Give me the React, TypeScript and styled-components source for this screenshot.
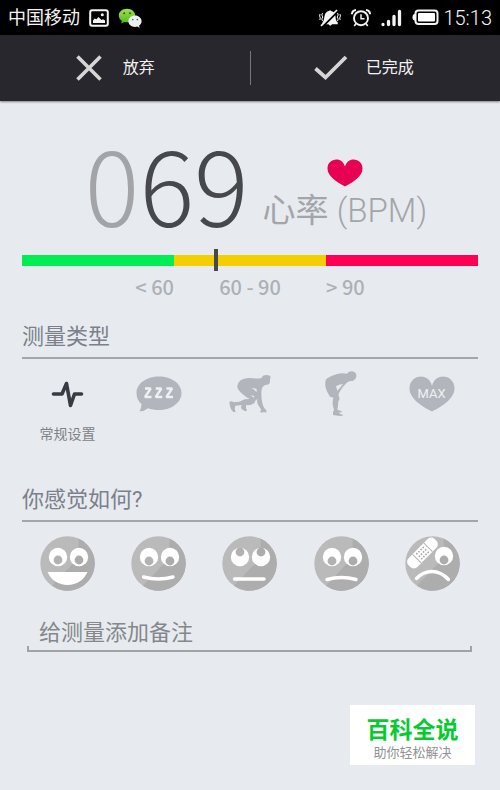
import React from "react";
import styled, { createGlobalStyle } from "styled-components";

const GlobalStyle = createGlobalStyle`
  * { box-sizing: border-box; }
  body {
    margin: 0;
    background: #e7ebf0;
    font-family: Roboto, "Noto Sans CJK SC", sans-serif;
  }
  button { font: inherit; border: 0; padding: 0; background: none; cursor: pointer; }
  svg { display: block; flex: none; }
`;

const Screen = styled.div`
  min-height: 100vh;
  display: flex;
  flex-direction: column;
  background: #e7ebf0;
`;

const StatusBar = styled.div`
  height: 35px;
  padding: 0 8px;
  display: flex;
  align-items: center;
  justify-content: space-between;
  background: #000;
  color: #f4f4f4;
`;

const StatusGroup = styled.div<{ $gap: number }>`
  display: flex;
  align-items: center;
  gap: ${(p) => p.$gap}px;
`;

const Carrier = styled.span`
  font-size: 18px;
  line-height: 24px;
`;

const Clock = styled.span`
  font-size: 20px;
  line-height: 24px;
  font-weight: 300;
  color: #f4f4f4;
`;

const ActionBar = styled.header`
  height: 66px;
  display: grid;
  grid-template-columns: 1fr 1px 1fr;
  align-items: center;
  background: #28272d;
  box-shadow: 0 1px 2px rgba(0, 0, 0, 0.45);
`;

const Divider = styled.span`
  height: 34px;
  background: #77777c;
`;

const Action = styled.button<{ $gap: number; $shift: number }>`
  height: 66px;
  display: flex;
  align-items: center;
  justify-content: center;
  gap: ${(p) => p.$gap}px;
  padding-right: ${(p) => p.$shift}px;
  && {
    color: #f2f2f2;
    font-size: 16px;
    line-height: 24px;
  }
`;

const Content = styled.main`
  flex: 1;
  display: flex;
  flex-direction: column;
  padding: 38px 22px 24px;
`;

const Reading = styled.section`
  height: 102px;
  display: flex;
  justify-content: center;
  gap: 14px;
  padding-left: 12px;
`;

const Digits = styled.div`
  font-family: "Noto Sans CJK SC", sans-serif;
  font-weight: 300;
  font-size: 102px;
  line-height: 88px;
  color: #47484c;
`;

const LeadingZero = styled.span`
  color: #a3a4a8;
`;

const Unit = styled.div`
  display: flex;
  flex-direction: column;
  align-items: center;
  gap: 2px;
  padding-top: 20px;
  color: #a4a5a9;
  font-size: 33px;
  line-height: 44px;
`;

const UnitCode = styled.span`
  font-weight: 300;
`;

const Gauge = styled.div`
  position: relative;
  margin-top: 14px;
  height: 11px;
  display: grid;
  grid-template-columns: repeat(3, 1fr);
`;

const Zone = styled.span<{ $color: string }>`
  background: ${(p) => p.$color};
`;

const Marker = styled.span`
  position: absolute;
  left: 42%;
  top: -6px;
  width: 4px;
  height: 22px;
  background: #47484c;
`;

const ZoneLabels = styled.div`
  display: grid;
  grid-template-columns: repeat(3, 1fr);
  margin-top: 9px;
  font-family: "Noto Sans CJK SC", sans-serif;
  font-weight: 500;
  font-size: 20px;
  line-height: 24px;
  color: #adb0b5;
`;

const ZoneLabel = styled.span<{ $align: string }>`
  text-align: ${(p) => p.$align};
`;

const Heading = styled.h2<{ $top: number }>`
  margin: ${(p) => p.$top}px 0 0;
  height: 39px;
  border-bottom: 2px solid #a3a7ac;
  font-weight: 400;
  font-size: 22px;
  line-height: 34px;
  color: #7b808b;
`;

const Options = styled.div<{ $height: number; $top: number }>`
  display: grid;
  grid-template-columns: repeat(5, 1fr);
  height: ${(p) => p.$height}px;
  padding-top: ${(p) => p.$top}px;
`;

const Option = styled.button`
  display: flex;
  flex-direction: column;
  align-items: center;
  gap: 8px;
  && {
    color: #808287;
    font-size: 14px;
    line-height: 20px;
  }
`;

const IconSlot = styled.span`
  height: 44px;
  display: flex;
  align-items: center;
`;

const NoteField = styled.label`
  display: block;
  margin: 19px 6px 0 5px;
  height: 42px;
  background: linear-gradient(#a0a4a7, #a0a4a7) left bottom / 2px 4px no-repeat,
    linear-gradient(#a0a4a7, #a0a4a7) right bottom / 2px 4px no-repeat;
  border-bottom: 2px solid #a0a4a7;
`;

const NoteInput = styled.input`
  width: 100%;
  height: 42px;
  padding: 2px 12px 0 12px;
  border: 0;
  outline: 0;
  background: none;
  font: inherit;
  font-size: 22px;
  color: #55585c;
  &::placeholder { color: #85878a; opacity: 1; }
`;

const Brand = styled.aside`
  align-self: flex-end;
  margin: auto 3px 1px 0;
  width: 125px;
  height: 60px;
  padding-top: 12px;
  background: #fff;
  text-align: center;
`;

const BrandName = styled.div`
  font-weight: 700;
  font-size: 23px;
  line-height: 28px;
  color: #05cb31;
`;

const BrandLine = styled.div`
  font-size: 13px;
  line-height: 15px;
  color: #929292;
`;

const PictureIcon = () => (
  <svg width="20" height="18" viewBox="0 0 20 18">
    <rect x="1.2" y="1.2" width="17.6" height="15.6" rx="2" fill="none" stroke="#f4f4f4" strokeWidth="2" />
    <path d="M4 14V11.5L5.5 9.5L7.5 10.2L9.5 8L12.5 11L14 10.2L16 11.5V14Z" fill="#f4f4f4" />
    <circle cx="13.3" cy="5.8" r="1.5" fill="#f4f4f4" />
  </svg>
);

const WeChatIcon = () => (
  <svg width="24" height="20" viewBox="0 0 24 20">
    <defs>
      <linearGradient id="chat" x1="0" y1="0" x2="0" y2="1">
        <stop offset="0" stopColor="#a0e047" />
        <stop offset="1" stopColor="#4fb91f" />
      </linearGradient>
    </defs>
    <path d="M9 .8C4.4 .8 .8 3.700 .8 7.500c0 2.200 1.100 4 3 5.200L3.200 15.500l3-1.600c.9.2 1.800.4 2.800.4 4.600 0 8.200-3 8.200-6.800S13.600.8 9 .8Z" fill="url(#chat)" />
    <circle cx="6.2" cy="5.3" r="1" fill="#245b12" />
    <circle cx="12" cy="5.3" r="1" fill="#245b12" />
    <path d="M17 7.500c-3.700 0-6.600 2.500-6.600 5.700s2.900 5.700 6.600 5.700c.8 0 1.600-.1 2.300-.3l2.300 1.100-.5-2.200c1.500-1 2.500-2.500 2.500-4.300 0-3.200-2.900-5.700-6.600-5.700Z" fill="#eef1f3" />
    <circle cx="14.800" cy="11.600" r=".8" fill="#555" />
    <circle cx="19.300" cy="11.600" r=".8" fill="#555" />
  </svg>
);

const MutedBellIcon = () => (
  <svg width="22" height="18" viewBox="0 0 22 18">
    <path d="M3.500 13.500C5.400 11.500 4.900 8 6 5.300C6.800 3.300 8.500 2.400 10 2.100Q11 .3 12.100 2.100C15.300 2.700 16.500 5 16.600 8.200C16.700 10.700 17.300 12 18.800 13.500V15.300H3.500ZM9.500 15.300H13Q11.300 18 9.500 15.300Z" fill="#f4f4f4" />
    <path d="M3.200 18L19.200 2" stroke="#000" strokeWidth="2" />
    <path d="M2 16.800L18 1" stroke="#f4f4f4" strokeWidth="1.700" />
    <path d="M3.500 4L2.800 6L3.800 8L2.800 10L3.500 12M1 5L.6 7L1.300 9L.8 11M18.500 4L19.200 6L18.200 8L19.200 10L18.500 12M21 5L21.400 7L20.700 9L21.200 11" fill="none" stroke="#f4f4f4" strokeWidth="1" />
  </svg>
);

const AlarmIcon = () => (
  <svg width="20" height="18" viewBox="0 0 20 18" fill="none" stroke="#f4f4f4">
    <circle cx="10" cy="9.200" r="7" strokeWidth="1.900" />
    <path d="M10 5.200V9.700H13.500" strokeWidth="1.500" />
    <path d="M.9 5.300Q1.200 1.300 5 1M19.100 5.300Q18.800 1.300 15 1" strokeWidth="2" />
    <path d="M5 14.500L3.300 17M15 14.500L16.700 17" strokeWidth="1.600" />
  </svg>
);

const SignalIcon = () => (
  <svg width="21" height="18" viewBox="0 0 21 18" stroke="#f4f4f4" strokeWidth="3.300" strokeLinecap="round">
    <path d="M2 15.500V15.600M7.500 12.500V15.500M13 7.500V15.500M18.500 2.500V15.500" />
  </svg>
);

const BatteryIcon = () => (
  <svg width="27" height="17" viewBox="0 0 27 17">
    <rect x="3.500" y="1.500" width="22" height="13.500" rx="3" fill="none" stroke="#f4f4f4" strokeWidth="2" />
    <rect x="6" y="4" width="17" height="8.500" rx="1" fill="#fff" />
    <path d="M3 5Q.5 5 .5 8.200T3 11.500Z" fill="#f4f4f4" />
  </svg>
);

const CrossIcon = () => (
  <svg width="26" height="26" viewBox="0 0 26 26" stroke="#d6d6d6" strokeWidth="3.600">
    <path d="M1.500 1.500L24.500 24.500M24.500 1.500L1.500 24.500" />
  </svg>
);

const CheckIcon = () => (
  <svg width="34" height="26" viewBox="0 0 34 26" fill="none" stroke="#d6d6d6" strokeWidth="3.800">
    <path d="M1.500 13.500L11.500 22.500L32 2" />
  </svg>
);

const HeartIcon = () => (
  <svg width="36" height="28" viewBox="0 0 36 28">
    <path d="M18 27.500C10 23 .5 17.500 .5 9.500C.5 4 4.500 .5 9.500 .5C13.500 .5 16.500 3 18 7.500C19.500 3 22.500 .5 26.500 .5C31.500 .5 35.500 4 35.500 9.500C35.500 17.500 26 23 18 27.500Z" fill="#e80053" />
  </svg>
);

const PulseIcon = () => (
  <svg width="33" height="27" viewBox="0 0 33 27" fill="none" stroke="#363b44" strokeWidth="3.600" strokeLinecap="round" strokeLinejoin="round">
    <path d="M2.500 13H11L15.500 2.500L19.500 24.500L23.500 13H30.500" />
  </svg>
);

const SleepIcon = () => (
  <svg width="46" height="36" viewBox="0 0 46 36">
    <path d="M23 .5C10.500 .5 .5 7.500 .5 17C.5 22 2.500 25.500 5.500 28Q5.500 32 3.500 35.200Q8 35.500 12 32.200C15 33.300 19 34 23 34C35.500 34 45.500 26.500 45.500 17S35.500 .5 23 .5Z" fill="#b2b6bc" />
    <path d="M10 12.500H15.700L10 21H16.500M20.700 12.500H26.400L20.700 21H27.200M31.400 12.500H37.100L31.400 21H37.900" transform="translate(-1 0)" fill="none" stroke="#eef1f4" strokeWidth="2.300" strokeLinejoin="bevel" />
  </svg>
);

const StartIcon = () => (
  <svg width="42" height="40" viewBox="82 56 126 120">
    <path fill="#b2b6bc" d="M180 66Q185 58 195 59L205 61Q208 66 205 72L205 80Q204 88 197 88L190 89L183 95Q179 101 179 111L180 132Q182 148 187 157L194 165L194 172L187 170L180 172L176 171L178 162L169 148Q165 139 167 130L161 136L158 143L147 149L133 150L133 158L136 166L130 168L119 160L118 153L121 149L101 151L99 160L102 169L97 171Q85 164 83 139L89 138L98 141L113 139L129 132L145 131Q136 128 127 120Q109 106 107 95Q107 83 118 74Q130 67 145 68Q165 71 180 68ZM149 97L158 104L165 111L165 101ZM147 120L156 127L158 122Z" />
  </svg>
);

const RestIcon = () => (
  <svg width="34" height="46" viewBox="368 45 102 138">
    <path fill="#b2b6bc" fillRule="evenodd" d="M405 55Q420 49 437 53Q441 46 452 46Q464 48 465 58Q466 69 454 75L447 75L438 79L425 92L414 109L411 117L414 124L414 131L411 136L410 150L408 161L421 166L423 169L414 169L416 174L424 176L424 180L409 179L395 177L395 169L398 161L394 146L394 136L396 125L386 122Q374 106 372 91Q370 71 378 67Q389 60 405 55ZM404 91L408 104L415 97L425 84L413 86Z" />
  </svg>
);

const MaxText = styled.text`
  font-family: Roboto, sans-serif;
  font-size: 13px;
  fill: #eef1f4;
  text-anchor: middle;
`;

const MaxIcon = () => (
  <svg width="46" height="36" viewBox="0 0 46 36">
    <path d="M23 35.500C13 30.500 .5 22.500 .5 12.500C.5 5 6 .5 12 .5C17.500 .5 21.500 4 23 10C24.500 4 28.500 .5 34 .5C40 .5 45.500 5 45.500 12.500C45.500 22.500 33 30.500 23 35.500Z" fill="#b2b6bc" />
    <MaxText x="22.500" y="22">MAX</MaxText>
  </svg>
);

type Mood = "great" | "good" | "neutral" | "low" | "hurt";

const mouths: Record<Mood, React.ReactNode> = {
  great: <path d="M7.500 36H47.500C44 44 36.500 49 27.500 49S11 44 7.500 36Z" fill="#fff" stroke="none" />,
  good: <path d="M12.500 41Q27.500 45 42 41" />,
  neutral: <path d="M12.500 43H42" />,
  low: <path d="M13 43.500Q27.500 39.500 42 43.500" />,
  hurt: <path d="M11.500 42.500Q18 35.500 27 35.500T43.500 43.500" />,
};

const FaceIcon = ({ mood }: { mood: Mood }) => {
  const hurt = mood === "hurt";
  const pupilY = mood === "neutral" ? 16 : mood === "great" || hurt ? 24 : 25;
  const eyeY = hurt ? 20 : 21;
  return (
    <svg width="55" height="55" viewBox="0 0 55 55">
      <circle cx="27.500" cy="27.500" r="27.200" fill="#bababa" />
      <path d="M38.500 2.600A27.200 27.200 0 1 1 12 49.800L31 29.500Q38.500 23 38.500 15Z" fill="#adadad" />
      {!hurt && <circle cx="18" cy={eyeY} r="9.200" fill="#fff" />}
      <circle cx="39" cy={eyeY} r="9.200" fill="#fff" />
      {!hurt && <circle cx="18" cy={pupilY} r="4.400" fill="#b2b2b2" />}
      <circle cx="39" cy={pupilY} r="4.400" fill="#acacac" />
      <g fill="none" stroke="#fff" strokeWidth="3.400" strokeLinecap="round">
        {mouths[mood]}
      </g>
      {hurt && (
        <g transform="translate(17.500 17) rotate(-45)">
          <rect x="-18.500" y="-6.200" width="37" height="12.400" rx="5" fill="#fff" />
          <path d="M-8 -6V6M8 -6V6" stroke="#b5b5b5" strokeWidth="1" />
          <g fill="#a5a5a5">
            {[-4.5, -1.5, 1.5, 4.5].map((x) =>
              [-3.5, 0, 3.5].map((y) => <circle key={`${x}/${y}`} cx={x} cy={y} r="0.900" />)
            )}
          </g>
        </g>
      )}
    </svg>
  );
};

const activities = [
  { name: "常规设置", icon: <PulseIcon />, label: true },
  { name: "睡眠", icon: <SleepIcon />, label: false },
  { name: "运动前", icon: <StartIcon />, label: false },
  { name: "运动后", icon: <RestIcon />, label: false },
  { name: "最大心率", icon: <MaxIcon />, label: false },
];

const moods: Mood[] = ["great", "good", "neutral", "low", "hurt"];

export default function App() {
  return (
    <>
      <GlobalStyle />
      <Screen lang="zh-CN">
        <StatusBar>
          <StatusGroup $gap={9}>
            <Carrier>中国移动</Carrier>
            <PictureIcon />
            <WeChatIcon />
          </StatusGroup>
          <StatusGroup $gap={10}>
            <MutedBellIcon />
            <AlarmIcon />
            <SignalIcon />
            <StatusGroup $gap={4}>
              <BatteryIcon />
              <Clock>15:13</Clock>
            </StatusGroup>
          </StatusGroup>
        </StatusBar>
        <ActionBar>
          <Action type="button" $gap={21} $shift={19}>
            <CrossIcon />
            放弃
          </Action>
          <Divider />
          <Action type="button" $gap={18} $shift={23}>
            <CheckIcon />
            已完成
          </Action>
        </ActionBar>
        <Content>
          <Reading>
            <Digits>
              <LeadingZero>0</LeadingZero>69
            </Digits>
            <Unit>
              <HeartIcon />
              <span>
                心率 <UnitCode>(BPM)</UnitCode>
              </span>
            </Unit>
          </Reading>
          <Gauge>
            <Zone $color="#00ed53" />
            <Zone $color="#f4cf00" />
            <Zone $color="#ff0054" />
            <Marker />
          </Gauge>
          <ZoneLabels>
            <ZoneLabel $align="right">&lt; 60</ZoneLabel>
            <ZoneLabel $align="center">60 - 90</ZoneLabel>
            <ZoneLabel $align="left">&gt; 90</ZoneLabel>
          </ZoneLabels>
          <Heading $top={21}>测量类型</Heading>
          <Options $height={93} $top={13}>
            {activities.map((a) => (
              <Option key={a.name} type="button" aria-label={a.name}>
                <IconSlot>{a.icon}</IconSlot>
                {a.label && a.name}
              </Option>
            ))}
          </Options>
          <Heading $top={31}>你感觉如何?</Heading>
          <Options $height={69} $top={14}>
            {moods.map((mood) => (
              <Option key={mood} type="button" aria-label={mood}>
                <FaceIcon mood={mood} />
              </Option>
            ))}
          </Options>
          <NoteField>
            <NoteInput type="text" placeholder="给测量添加备注" aria-label="给测量添加备注" />
          </NoteField>
          <Brand>
            <BrandName>百科全说</BrandName>
            <BrandLine>助你轻松解决</BrandLine>
          </Brand>
        </Content>
      </Screen>
    </>
  );
}
